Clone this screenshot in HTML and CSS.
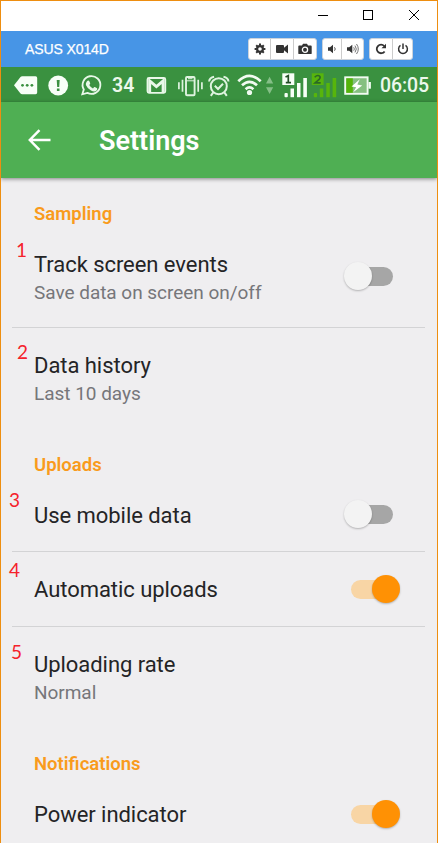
FILE: index.html
```html
<!DOCTYPE html>
<html lang="en">
<head>
<meta charset="utf-8">
<title>ASUS X014D</title>
<link rel="stylesheet" href="styles.css">
</head>
<body>
<div class="window">
  <div class="titlebar">
    <svg class="wincontrols" viewBox="310 1 120 30" fill="none" stroke="#000" shape-rendering="crispEdges">
      <path d="M318 15.500h10M363.500 10.500h9v9h-9z"/>
      <path d="M409 10l10 10M419 10l-10 10" shape-rendering="auto"/>
    </svg>
  </div>

  <header class="device">
    <span class="device-name">ASUS X014D</span>
    <div class="tools">
      <div class="group">
        <button class="w22"><svg viewBox="0 0 12 12"><circle cx="6" cy="6" r="2.900" fill="none" stroke="#333" stroke-width="2.200"/><path d="M6 .6v2M6 9.400v2M.6 6h2M9.400 6h2M2.200 2.200l1.400 1.400M8.400 8.400l1.400 1.400M2.200 9.800l1.400-1.400M8.400 3.600l1.400-1.400" stroke="#333" stroke-width="2"/></svg></button>
        <button class="w23"><svg viewBox="0 0 12 12"><path d="M1 2h6q1 0 1 1v1.700L12 1.500v9L8 7.300V9q0 1-1 1H1Q0 10 0 9V3q0-1 1-1z" fill="#333"/></svg></button>
        <button class="w23"><svg class="camera" viewBox="0 0 14 12"><path d="M1.200 2.500H4L5 .8h4l1 1.700h2.800q.9 0 .9.900v6.800q0 .9-.9.900H1.200q-.9 0-.9-.9V3.400q0-.9.900-.9z" fill="#333"/><circle cx="7" cy="6.700" r="2.600" fill="#333" stroke="#fff" stroke-width="1.300"/></svg></button>
      </div>
      <div class="group">
        <button class="w18"><svg viewBox="0 0 12 12"><path d="M2 4.200h2L7 1.700v8.600L4 7.800H2z" fill="#333"/><path d="M8.500 4.300q1.500 1.700 0 3.400" fill="none" stroke="#555"/></svg></button>
        <button class="w22"><svg viewBox="0 0 12 12"><path d="M0 4.200h2.200L5.300 1.700v8.600L2.200 7.800H0z" fill="#333"/><path d="M6.700 4.300q1.300 1.700 0 3.400M8 2.600q2.600 3.400 0 6.800M9.500 1q3.600 5 0 10" fill="none" stroke="#666" stroke-width=".9"/></svg></button>
      </div>
      <div class="group">
        <button class="w22"><svg viewBox="0 0 12 12"><path d="M9.600 8.400A4.300 4.300 0 1 1 9.200 3" fill="none" stroke="#333" stroke-width="1.800"/><path d="M11 .8v4.500H6.500z" fill="#333"/></svg></button>
        <button class="w20"><svg viewBox="0 0 12 12"><path d="M3.500 2.400a4.400 4.400 0 1 0 5 0M6 .5v5.500" fill="none" stroke="#333" stroke-width="1.500"/></svg></button>
      </div>
    </div>
  </header>

  <div class="statusbar">
    <svg class="s-notify" viewBox="1 67 111 34">
      <path d="M14 84.300L20.500 76q.7-.8 1.700-.8H35.500q1.700 0 1.700 1.700v14.700q0 1.700-1.700 1.700H22.200q-1 0-1.700-.8z" fill="#f7fff7"/>
      <g fill="#3a9140"><circle cx="22.500" cy="84.300" r="1.400"/><circle cx="27.200" cy="84.300" r="1.400"/><circle cx="31.900" cy="84.300" r="1.400"/></g>
      <circle cx="58.200" cy="84.500" r="9.900" fill="#f7fff7"/>
      <path d="M56.700 79h3l-.5 7h-2zM56.900 87.600h2.600v2.300h-2.600z" fill="#3a9140"/>
      <path d="M82.300 93.300l1.500-4.800a8.900 8.900 0 1 1 3.600 3.400z" fill="none" stroke="#e9f8e9" stroke-width="1.800"/>
      <path d="M86.800 80.400q1.500-1.600 2.400-.4l1 2.300q.2.600-1 1.700 1.400 2.400 3.800 3.400 1.300-1.500 1.800-1.300l2.300 1.200q.7 1-.8 2.500-2 1.500-5.300-.3-3.800-2.300-5.100-5.600-.4-2 .9-3.500z" fill="#e9f8e9"/>
    </svg>
    <span class="count">34</span>
    <svg class="s-system" viewBox="140 67 238 34">
      <rect x="147.500" y="77" width="17.800" height="14.800" rx="1.500" fill="none" stroke="#e9f8e9" stroke-width="1.800"/>
      <path d="M149.700 91V79.800l6.700 5.800 6.700-5.800V91" fill="none" stroke="#e9f8e9" stroke-width="2.900"/>
      <g fill="none" stroke="#dff3df">
        <rect x="186" y="76" width="8.600" height="18.200" rx="1" stroke-width="1.900"/>
        <path d="M186 79.800h8.600M188 77.700h4.500" stroke-width="1"/>
        <path d="M182.500 78.800v12M198.200 78.800v12M178.900 81.300v7M201.900 81.300v7" stroke-width="1.700"/>
      </g>
      <g fill="none" stroke="#dff3df" stroke-width="2">
        <circle cx="218.800" cy="85.200" r="8"/>
        <path d="M214.800 84.800l3.200 3.200 5-5.300M209.100 80.500q.4-4 5-4.800M228.500 80.500q-.4-4-5-4.800M213.300 91.300l-2.500 3.500M224.300 91.300l2.500 3.500"/>
      </g>
      <g fill="none" stroke="#f1fbf1" stroke-width="2.700">
        <path d="M238.300 80.300q11.200-10.700 22.400 0M242 84.300q7.500-7 15 0M245.600 88.200q3.900-3.500 7.800 0"/>
      </g>
      <circle cx="249.500" cy="91.500" r="2.600" fill="#f1fbf1"/>
      <path d="M266 82.500l3.600-6.800 3.600 6.800zM266 86.300l3.600 6.800 3.600-6.800z" fill="#85bf87"/>
      <g fill="#f7fff7"><rect x="282.300" y="72.300" width="12" height="11.700"/><rect x="284.500" y="92" width="3.300" height="4.200" rx="1"/><rect x="290.500" y="87.500" width="3.500" height="8.700"/><rect x="297" y="82" width="3.500" height="14.200"/><rect x="303.300" y="77" width="3.600" height="19.200"/></g>
      <path d="M285.500 76l2.800-1.300v7M285.800 81.700h5.200" fill="none" stroke="#244f28" stroke-width="1.700"/>
      <g fill="#57b50c"><rect x="311.800" y="72.300" width="11.800" height="11.700"/><rect x="313.800" y="92" width="3.300" height="4.200" rx="1"/><rect x="319.800" y="87.500" width="3.500" height="8.700"/><rect x="326.300" y="82" width="3.500" height="14.200"/><rect x="332.600" y="77" width="3.600" height="19.200"/></g>
      <path d="M314.700 76.300q2.800-3 5.200-.9 1 2-2.200 4.200l-2.700 2.300h5.700" fill="none" stroke="#2b6a25" stroke-width="1.600"/>
      <rect x="345.200" y="76.300" width="22.400" height="16.500" fill="#85c080" stroke="#f1fbf1" stroke-width="1.900"/>
      <path d="M346.300 77.300h6.500v14.500h-6.500z" fill="#55b40a"/>
      <path d="M368.500 81h2.400v6.700h-2.400z" fill="#f1fbf1"/>
      <path d="M359.800 78.300l-8.300 7.100 4.700.9-3 5 9-6.900-4.900-1z" fill="#fff"/>
    </svg>
    <span class="clock">06:05</span>
  </div>

  <div class="appbar">
    <svg class="back" viewBox="0 0 24 24" fill="none" stroke="#fff" stroke-width="2.600"><path d="M12 1.700L1.900 12 12 22.300M2 12h21.500"/></svg>
    <h1>Settings</h1>
  </div>

  <main class="settings">
    <h2>Sampling</h2>
    <div class="row double ruled">
      <div class="text"><div class="title">Track screen events</div><div class="sub">Save data on screen on/off</div></div>
      <span class="switch up"></span>
      <span class="mark m1">1</span>
    </div>
    <div class="row double">
      <div class="text"><div class="title">Data history</div><div class="sub">Last 10 days</div></div>
      <span class="mark m2">2</span>
    </div>
    <h2>Uploads</h2>
    <div class="row first ruled">
      <div class="title low">Use mobile data</div>
      <span class="switch up-one"></span>
      <span class="mark m3">3</span>
    </div>
    <div class="row ruled">
      <div class="title low">Automatic uploads</div>
      <span class="switch on"></span>
      <span class="mark m4">4</span>
    </div>
    <div class="row double">
      <div class="text"><div class="title">Uploading rate</div><div class="sub">Normal</div></div>
      <span class="mark m5">5</span>
    </div>
    <h2>Notifications</h2>
    <div class="row first">
      <div class="title">Power indicator</div>
      <span class="switch on"></span>
    </div>
  </main>
</div>
</body>
</html>
```
FILE: styles.css
```css
* { box-sizing: border-box; }
body { margin: 0; font-family: Roboto, sans-serif; }
h1, h2 { margin: 0; font-weight: 600; }
.window {
  width: 438px; height: 843px; overflow: hidden;
  border: 1px solid #ee8e10; border-bottom: 0;
  background: #efeef0;
}
.titlebar { height: 30px; background: #fff; display: flex; justify-content: flex-end; }
.wincontrols { width: 120px; height: 30px; margin-right: 7px; }

.device {
  height: 36px; padding: 0 24px; background: #4795e6;
  display: flex; align-items: center; justify-content: space-between;
}
.device-name {
  color: #fff; font: 14px "Liberation Sans", sans-serif;
  letter-spacing: -.1px; -webkit-text-stroke: .25px #fff;
}
.tools { display: flex; gap: 5px; }
.group {
  display: flex; height: 22px; background: #fff;
  border: 1px solid #ccd3db; border-radius: 3px; overflow: hidden;
}
.group button {
  display: flex; align-items: center; justify-content: center;
  padding: 0; border: 0; background: none;
}
.group button + button { border-left: 1px solid #ccc; }
.group svg { width: 12px; height: 12px; }
.group svg.camera { width: 14px; }
.w18 { width: 18px; } .w20 { width: 20px; } .w22 { width: 22px; } .w23 { width: 23px; }
.group:first-child .w22 { width: 21px; }

.statusbar {
  height: 35px; background: #3a9140; color: #ecf8ec;
  display: flex; align-items: center; font-size: 19.500px; font-weight: 600;
}
.statusbar svg { height: 34px; flex: none; }
.statusbar span { padding-top: 2px; line-height: 32px; }
.s-notify { width: 111px; }
.count { width: 28px; }
.s-system { width: 238px; }
.clock { margin-left: 2px; font-weight: 500; letter-spacing: -.1px; }

.appbar {
  height: 76px; padding-left: 27px; background: #4faf53; color: #fff;
  display: flex; align-items: center; position: relative;
  box-shadow: 0 1px 4px rgba(0, 0, 0, .45);
}
.back { width: 23px; height: 24px; }
.appbar h1 { margin-left: 48px; padding-top: 1px; font-size: 27px; line-height: 32px; }

.settings h2 {
  height: 50px; padding: 24px 0 0 33px;
  font-size: 18.500px; line-height: 24px; color: #f99b1c;
}
.row {
  height: 75px; margin: 0 12px 0 11px; padding: 0 21px 0 22px; position: relative;
  display: flex; align-items: center; justify-content: space-between;
}
.row.double { height: 101px; }
.row.double.ruled { height: 100px; }
.row.first { height: 73px; }
.ruled { border-bottom: 1px solid #d3d3d5; }
.title { font-size: 22px; line-height: 28px; color: #242426; letter-spacing: -.05px; }
.title.low { padding-top: 2px; }
.sub { margin-top: 2px; font-size: 19px; line-height: 24px; color: #76767a; letter-spacing: -.03px; }

.switch {
  width: 42px; height: 19px; margin-right: 11px; border-radius: 10px;
  background: #a6a6a6; position: relative;
}
.switch.up { top: -1px; }
.switch.up-one { top: -1px; }
.switch::after {
  content: ""; position: absolute; left: -7px; top: -5px;
  width: 28px; height: 28px; border-radius: 50%;
  background: #f3f3f3; box-shadow: 0 1px 2px rgba(0, 0, 0, .25);
}
.switch.on { background: #f8d5a5; }
.switch.on::after { left: 21px; background: #ff9104; }

.mark { position: absolute; color: #f5222b; font: 19px/20px Lato, sans-serif; }
.m1 { left: 4px; top: 12px; }
.m2 { left: 5px; top: 14px; }
.m3 { left: -3px; top: 11px; }
.m4 { left: -3px; top: 8px; }
.m5 { left: -1px; top: 15px; }
```
